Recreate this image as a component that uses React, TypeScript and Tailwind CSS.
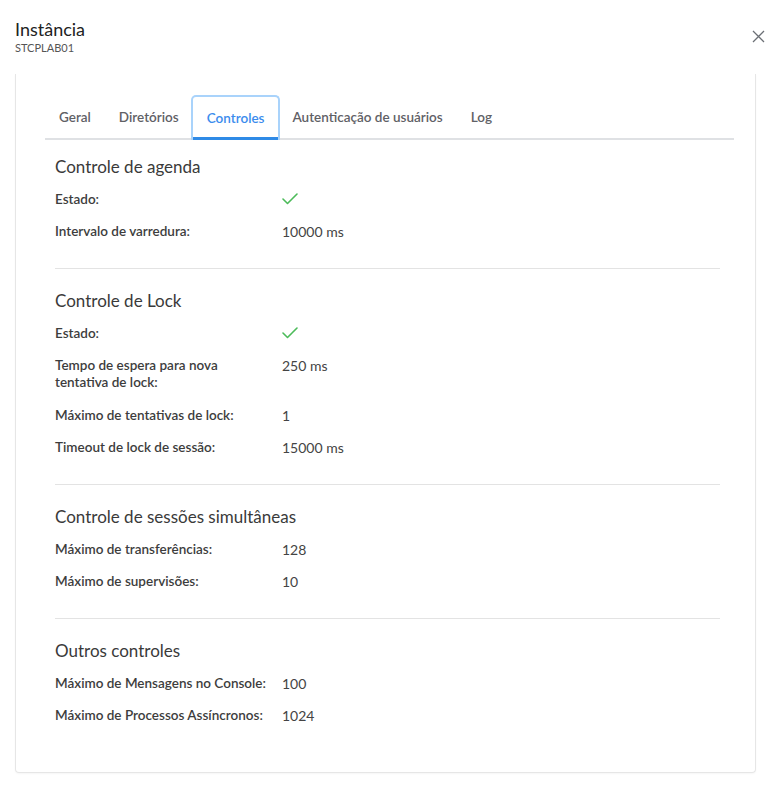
import React from "react";

const Check = () => (
  <svg width="16" height="12" viewBox="0 0 16 12" className="block">
    <polyline points="1,6 5.5,10.5 15,1" fill="none" stroke="#4cbb5a" strokeWidth="1.6" strokeLinecap="round" strokeLinejoin="round" />
  </svg>
);

type Row = { label: string; value: React.ReactNode };

const Section = ({ title, rows, last }: { title: string; rows: Row[]; last?: boolean }) => (
  <div className={last ? "pt-5 pb-[48px]" : "pt-5 pb-[27.5px] border-b border-[#e3e3e3]"}>
    <div className="text-[17px] leading-6 text-[#3a3a3a] mb-3">{title}</div>
    <div className="flex flex-col gap-[15.5px]">
      {rows.map((r, i) => (
        <div key={i} className="grid grid-cols-[227px_1fr] leading-[17px]">
          <div className="text-[13.5px] font-semibold text-[#3d3d3d] pr-3">{r.label}</div>
          <div className="text-[14px] text-[#444] flex items-center h-[17px]">{r.value}</div>
        </div>
      ))}
    </div>
  </div>
);

export default function App() {
  const tabs = ["Geral", "Diretórios", "Controles", "Autenticação de usuários", "Log"];
  return (
    <div className="w-[775px] h-[796px] bg-white" style={{ fontFamily: "Lato, 'Open Sans', sans-serif" }}>
      <div className="flex justify-between pl-[15px] pr-[10px] pt-[17px]">
        <div>
          <div className="text-[18px] leading-6 text-[#222]">Instância</div>
          <div className="text-[11px] leading-[14px] text-[#555]">STCPLAB01</div>
        </div>
        <svg width="13" height="13" viewBox="0 0 13 13" className="mt-[13px]">
          <path d="M1 1 L12 12 M12 1 L1 12" stroke="#6b6f75" strokeWidth="1.3" fill="none" />
        </svg>
      </div>
      <div className="mx-[15px] mt-[19px] w-[741px] border-x border-b border-[#e6e6e6] rounded-b-[4px] shadow-[0_1px_2px_rgba(0,0,0,0.04)]">
        <div className="pl-[29px] pr-[21px] pt-[21px]">
          <div className="flex border-b-2 border-[#dfe1e4]">
            {tabs.map((t) => {
              const active = t === "Controles";
              return (
                <div
                  key={t}
                  className={
                    active
                      ? "-mb-[2px] h-[45px] px-[14px] -mx-[2px] flex items-center text-[13.5px] font-semibold text-[#3b8ced] border-2 border-b-0 border-[#a9d3fb] rounded-t-[5px] shadow-[inset_0_-3px_0_#2f8ae6]"
                      : "-mb-[2px] h-[45px] px-3 flex items-center text-[13.5px] font-semibold text-[#5f6166] border-2 border-transparent"
                  }
                >
                  {t}
                </div>
              );
            })}
          </div>
          <div className="pl-[10px] pr-[14px]">
            <div className="-mt-[5.5px]">
              <Section
                title="Controle de agenda"
                rows={[
                  { label: "Estado:", value: <Check /> },
                  { label: "Intervalo de varredura:", value: "10000 ms" },
                ]}
              />
            </div>
            <Section
              title="Controle de Lock"
              rows={[
                { label: "Estado:", value: <Check /> },
                { label: "Tempo de espera para nova tentativa de lock:", value: "250 ms" },
                { label: "Máximo de tentativas de lock:", value: "1" },
                { label: "Timeout de lock de sessão:", value: "15000 ms" },
              ]}
            />
            <Section
              title="Controle de sessões simultâneas"
              rows={[
                { label: "Máximo de transferências:", value: "128" },
                { label: "Máximo de supervisões:", value: "10" },
              ]}
            />
            <Section
              last
              title="Outros controles"
              rows={[
                { label: "Máximo de Mensagens no Console:", value: "100" },
                { label: "Máximo de Processos Assíncronos:", value: "1024" },
              ]}
            />
          </div>
        </div>
      </div>
    </div>
  );
}
